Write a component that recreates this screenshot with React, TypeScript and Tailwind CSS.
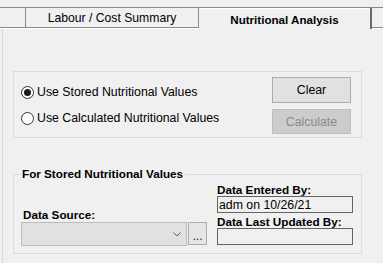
import React from 'react';

const Radio = ({ checked, label }: { checked?: boolean; label: string }) => (
  <div className="flex items-center h-[13px]">
    <span className="w-[13px] h-[13px] rounded-full border border-[#333333] bg-white flex items-center justify-center shrink-0">
      {checked && <span className="w-[7px] h-[7px] rounded-full bg-[#1c1c1c]" />}
    </span>
    <span className="ml-[3px] text-[12.3px] leading-[13px] text-black whitespace-nowrap">{label}</span>
  </div>
);

export default function App() {
  return (
    <div className="w-[383px] h-[263px] overflow-hidden bg-[#f0f0f0] text-black font-['Liberation_Sans',Arial,sans-serif]">
      {/* Tab strip */}
      <div className="flex items-start h-[29px] pt-[7px]">
        <div className="w-[25px] h-[21px] border-t border-b border-[#8a8a8a] shadow-[0_1px_0_#ffffff]" />
        <div className="w-[174px] h-[21px] border border-[#8a8a8a] shadow-[0_1px_0_#ffffff] flex items-center justify-center text-[12.2px] leading-[14px] whitespace-nowrap">
          Labour / Cost Summary
        </div>
        <div className="w-[173px] h-[22px] border-t border-r-2 border-t-[#8a8a8a] border-r-[#6a6a6a] shadow-[inset_0_1px_0_#ffffff] flex items-center justify-center pt-[2px] text-[11.6px] leading-[14px] font-bold whitespace-nowrap">
          Nutritional Analysis
        </div>
        <div className="flex-1 h-[21px] border-t border-b border-[#8a8a8a] shadow-[0_1px_0_#ffffff]" />
      </div>

      {/* Panel */}
      <div className="ml-[2px] h-[234px] border-l border-[#dadada] pt-[42px] pl-[10px]">
        {/* Mode group */}
        <div className="w-[349px] h-[67px] border border-[#dcdcdc] flex justify-between">
          <div className="pl-[7px] pt-[14px] flex flex-col gap-[13px]">
            <Radio checked label="Use Stored Nutritional Values" />
            <Radio label="Use Calculated Nutritional Values" />
          </div>
          <div className="pt-[5px] pr-[10px] flex flex-col gap-[6px]">
            <button className="w-[79px] h-[26px] bg-[#e1e1e1] border border-[#adadad] text-[12.3px] leading-[14px] text-black flex items-center justify-center">
              Clear
            </button>
            <button disabled className="w-[79px] h-[25px] bg-[#cccccc] border border-[#bfbfbf] text-[12.3px] leading-[14px] text-[#8b8b8b] flex items-center justify-center">
              Calculate
            </button>
          </div>
        </div>

        {/* Stored values group */}
        <div className="relative mt-[36px] w-[349px] h-[80px] border border-[#dcdcdc] flex">
          <span className="absolute left-[6px] top-[-8px] px-[2px] bg-[#f0f0f0] text-[11.7px] leading-[13px] font-bold whitespace-nowrap">
            For Stored Nutritional Values
          </span>
          <div className="pl-[7px] pt-[33px]">
            <div className="ml-[2px] text-[11.7px] leading-[13px] font-bold whitespace-nowrap">Data Source:</div>
            <div className="mt-[1px] flex items-start gap-[1px]">
              <div className="w-[166px] h-[24px] bg-[#e1e1e1] border border-[#bcbcbc] flex items-center justify-end pr-[5px]">
                <svg width="8" height="5" viewBox="0 0 8 5" className="mt-[1px]">
                  <polyline points="0.5,0.5 4,4 7.5,0.5" fill="none" stroke="#606060" strokeWidth="1" />
                </svg>
              </div>
              <button className="w-[19px] h-[23px] bg-[#e5e5e5] border border-[#adadad] text-[12px] leading-[14px] text-[#1a1a40] flex items-center justify-center pt-[4px]">
                ...
              </button>
            </div>
          </div>
          <div className="ml-[10px] pt-[8px] w-[136px]">
            <div className="text-[11.7px] leading-[13px] font-bold whitespace-nowrap">Data Entered By:</div>
            <div className="h-[17px] border border-[#646464] flex items-center pl-[1px] text-[12.3px] leading-[14px] whitespace-nowrap">
              adm on 10/26/21
            </div>
            <div className="mt-[2px] text-[11.7px] leading-[13px] font-bold whitespace-nowrap">Data Last Updated By:</div>
            <div className="h-[17px] border border-[#646464]" />
          </div>
        </div>
      </div>
    </div>
  );
}
